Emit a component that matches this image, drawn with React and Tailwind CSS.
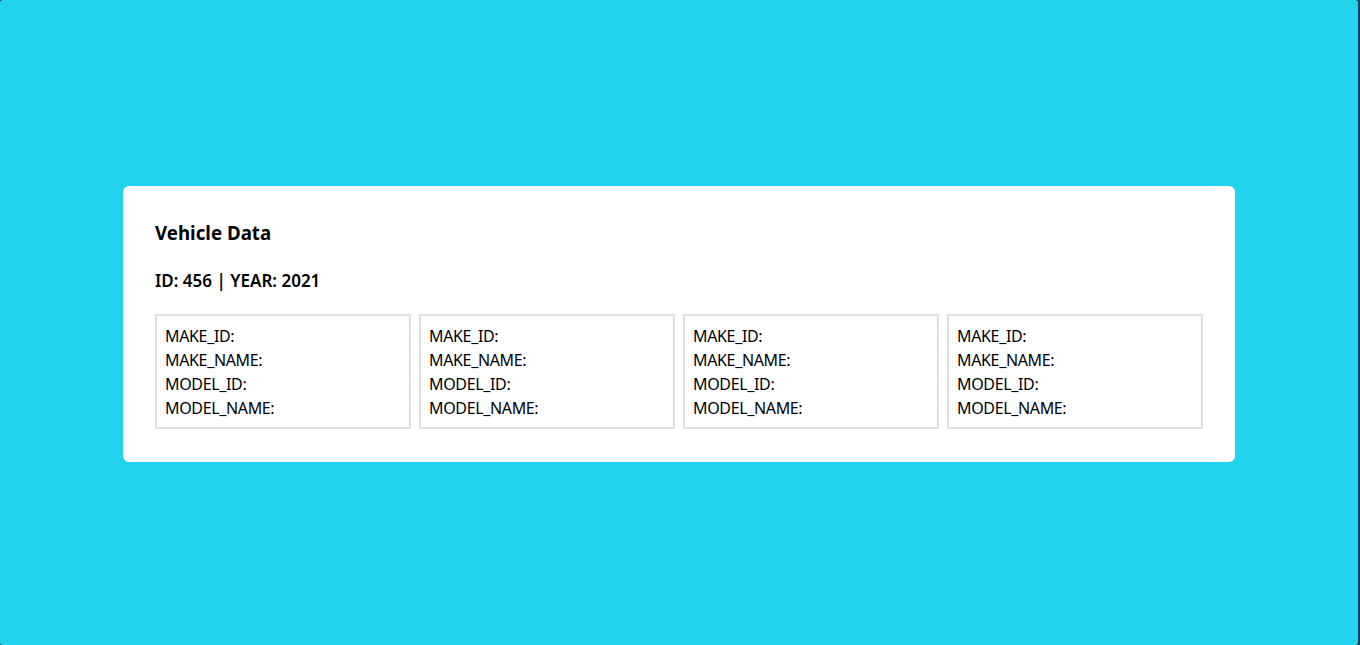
import React from 'react';

const fields = ['MAKE_ID:', 'MAKE_NAME:', 'MODEL_ID:', 'MODEL_NAME:'];

const VehicleCard = () => (
  <div className="border-2 border-[#e0e0e0] pl-2 pr-2 pt-2 pb-[7px] text-[16px] leading-6 tracking-[-0.35px] text-black">
    {fields.map((f) => (
      <div key={f}>{f}</div>
    ))}
  </div>
);

const App = () => {
  return (
    <div className="h-[645px] w-full bg-[#133c60]" style={{ fontFamily: '"Noto Sans", sans-serif' }}>
      <div className="flex h-full w-[1358px] items-center justify-center rounded-[3px] bg-[#22d3ee] pt-[2px]">
        <div className="w-[1112px] rounded-md bg-white px-8 pt-8 pb-[33px]">
          <h3 className="text-[18.72px] font-bold leading-[30px] text-black">Vehicle Data</h3>
          <h4 className="mt-[21px] text-[17px] font-semibold leading-6 text-black">ID: 456 | YEAR: 2021</h4>
          <div className="mt-[21px] grid grid-cols-4 gap-2">
            <VehicleCard />
            <VehicleCard />
            <VehicleCard />
            <VehicleCard />
          </div>
        </div>
      </div>
    </div>
  );
};

export default App;
